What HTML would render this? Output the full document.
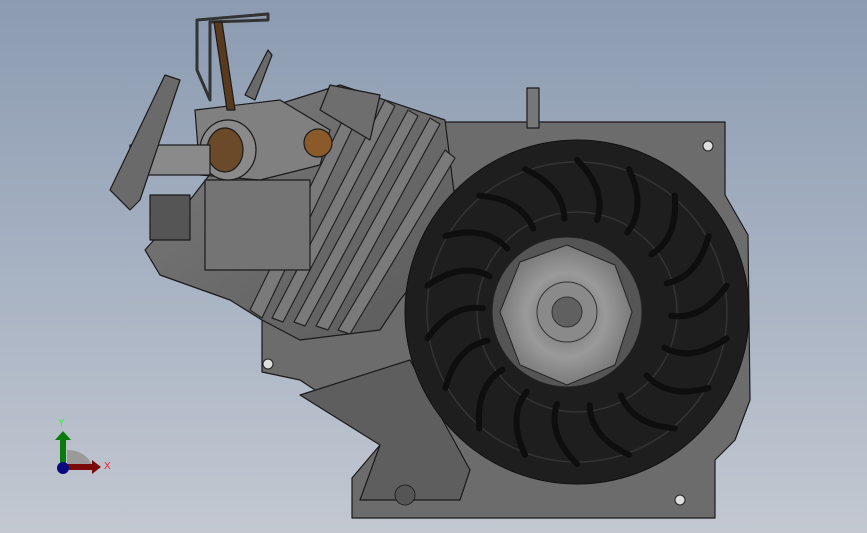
<!DOCTYPE html>
<html><head><style>
html,body{margin:0;padding:0}
body{width:867px;height:533px;overflow:hidden;background:linear-gradient(#8c9bb1,#a9b4c4 55%,#c3c8d1);font-family:"Liberation Sans",sans-serif}
svg{display:block}
</style></head><body>
<svg width="867" height="533" viewBox="0 0 867 533" xmlns="http://www.w3.org/2000/svg">
<defs>
<radialGradient id="hub" cx="0.5" cy="0.5" r="0.5"><stop offset="0" stop-color="#6a6a6a"/><stop offset="0.6" stop-color="#9a9a9a"/><stop offset="1" stop-color="#7a7a7a"/></radialGradient>
<linearGradient id="cyl" x1="0" y1="0" x2="1" y2="1"><stop offset="0" stop-color="#7c7c7c"/><stop offset="1" stop-color="#5a5a5a"/></linearGradient>
</defs>
<g stroke="#1a1a1a" stroke-width="1.2" stroke-linejoin="round">
<polygon fill="#6c6c6c" points="440,122 725,122 725,195 748,235 750,400 735,440 715,460 715,518 352,518 352,478 380,445 372,420 330,400 300,380 262,372 262,320 390,300 430,200"/>
<polygon fill="#5e5e5e" points="300,395 410,360 470,470 460,500 360,500 380,445"/>
<polygon fill="url(#cyl)" points="145,250 190,200 260,110 340,85 445,120 455,200 440,250 400,300 380,330 300,340 262,320 230,300 160,275"/>
<g fill="#7a7a7a" stroke="#222">
<polygon points="250,310 355,95 366,100 262,318"/>
<polygon points="272,318 385,100 395,106 283,322"/>
<polygon points="294,322 408,110 418,116 305,326"/>
<polygon points="316,326 430,118 440,124 328,330"/>
<polygon points="338,330 445,150 455,158 350,334"/>
</g>
<rect x="205" y="180" width="105" height="90" fill="#747474"/>
<polygon fill="#6e6e6e" points="320,110 330,85 380,95 370,140"/>
<polygon fill="#808080" points="195,110 280,100 330,130 320,165 260,180 200,175"/>
<ellipse cx="228" cy="150" rx="28" ry="30" fill="#8a8a8a"/>
<ellipse cx="225" cy="150" rx="18" ry="22" fill="#6b4a2a"/>
<ellipse cx="318" cy="143" rx="14" ry="14" fill="#8a5a2a"/>
<rect x="130" y="145" width="80" height="30" fill="#8a8a8a"/>
<rect x="150" y="195" width="40" height="45" fill="#555"/>
<polygon fill="#6a6a6a" points="110,190 165,75 180,80 140,200 130,210"/>
<polygon fill="none" stroke="#333" stroke-width="3" points="197,70 197,20 268,14 268,20 210,22 210,100"/>
<polygon fill="#5a3a1e" points="214,22 222,22 235,110 227,110"/>
<polygon fill="#6a6a6a" points="245,95 268,50 272,55 255,100"/>
<rect x="527" y="88" width="12" height="40" fill="#777"/>
</g>
<circle cx="577" cy="312" r="172" fill="#1e1e1e" stroke="#111"/>
<g fill="none" stroke="#333" stroke-width="1.5">
<circle cx="577" cy="312" r="150"/>
<circle cx="577" cy="312" r="100"/>
</g>
<g stroke="#0e0e0e" stroke-width="6" fill="none" stroke-linecap="round">
<path id="v" d="M577,160 q30,30 20,60"/>
</g>
<g stroke="#0e0e0e" stroke-width="6" fill="none" stroke-linecap="round">
<use href="#v" transform="rotate(20 577 312)"/><use href="#v" transform="rotate(40 577 312)"/><use href="#v" transform="rotate(60 577 312)"/><use href="#v" transform="rotate(80 577 312)"/><use href="#v" transform="rotate(100 577 312)"/><use href="#v" transform="rotate(120 577 312)"/><use href="#v" transform="rotate(140 577 312)"/><use href="#v" transform="rotate(160 577 312)"/><use href="#v" transform="rotate(180 577 312)"/><use href="#v" transform="rotate(200 577 312)"/><use href="#v" transform="rotate(220 577 312)"/><use href="#v" transform="rotate(240 577 312)"/><use href="#v" transform="rotate(260 577 312)"/><use href="#v" transform="rotate(280 577 312)"/><use href="#v" transform="rotate(300 577 312)"/><use href="#v" transform="rotate(320 577 312)"/><use href="#v" transform="rotate(340 577 312)"/>
</g>
<circle cx="567" cy="312" r="75" fill="#555" stroke="#222"/>
<polygon fill="url(#hub)" stroke="#222" points="567,245 615,265 632,312 615,365 567,385 520,365 500,312 520,262"/>
<circle cx="567" cy="312" r="30" fill="#8a8a8a" stroke="#333"/>
<circle cx="567" cy="312" r="15" fill="#606060" stroke="#333"/>
<circle cx="708" cy="146" r="5" fill="#ddd" stroke="#222"/>
<circle cx="268" cy="364" r="5" fill="#ddd" stroke="#222"/>
<circle cx="680" cy="500" r="5" fill="#ddd" stroke="#222"/>
<circle cx="405" cy="495" r="10" fill="#555" stroke="#222"/>
<path d="M67,450 A26,26 0 0 1 93,467 L67,467 Z" fill="#9a9a9a"/>
<rect x="60" y="438" width="6" height="29" fill="#0a7a0a"/>
<polygon points="55,440 63,431 71,440" fill="#0a7a0a"/>
<rect x="63" y="464" width="30" height="6" fill="#7a0a0a"/>
<polygon points="92,460 101,467 92,474" fill="#7a0a0a"/>
<circle cx="63" cy="468" r="6" fill="#0a0a80"/>
<text x="58" y="426" font-size="10" fill="#2f2">Y</text>
<text x="104" y="469" font-size="10" fill="#e22">X</text>
</svg>
</body></html>
